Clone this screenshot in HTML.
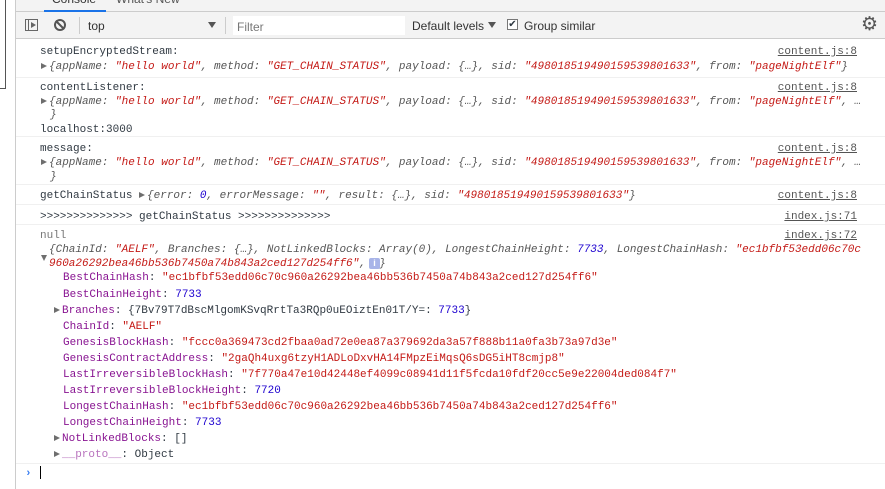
<!DOCTYPE html><html><head><meta charset="utf-8"><style>
*{margin:0;padding:0;box-sizing:border-box}
body{width:885px;height:489px;overflow:hidden;background:#fff;font-family:"Liberation Mono",monospace;font-size:11px;color:#303942;position:relative}
.l{position:absolute;white-space:pre;line-height:14px;height:14px;margin-top:2px}
.s{color:#c41a16}.k{color:#881391}.n{color:#1c00cf}.i{font-style:italic;color:#565656}
.lnk{position:absolute;right:28px;text-decoration:underline;color:#545454;white-space:pre;line-height:14px;margin-top:2px}
.b{position:absolute;left:16px;right:0;height:1px;background:#f0f0f0}
.ar{display:inline-block;width:0;height:0;border-left:6px solid #6e6e6e;border-top:3.5px solid transparent;border-bottom:3.5px solid transparent;margin-right:2px}
.ad{position:absolute;width:0;height:0;border-top:6px solid #6e6e6e;border-left:3.5px solid transparent;border-right:3.5px solid transparent}
.ui{font-family:"Liberation Sans",sans-serif;font-size:12px;position:absolute;color:#333}
</style></head><body>
<div style="position:absolute;left:15px;top:0;width:1px;height:489px;background:#ccc"></div>
<div style="position:absolute;left:5px;top:0;width:1px;height:88px;background:#555"></div>
<div style="position:absolute;left:0;top:88px;width:6px;height:1px;background:#555"></div>
<div style="position:absolute;left:16px;top:0;right:0;height:12px;background:#f3f3f3;border-bottom:1px solid #ccc"></div>
<div style="position:absolute;left:44px;top:10px;width:62px;height:2px;background:#1a73e8"></div>
<div class="ui" style="top:-8px;left:52px;color:#333">Console</div><div class="ui" style="top:-8px;left:116px;color:#555">What's New</div>
<div style="position:absolute;left:16px;top:12px;right:0;height:27px;background:#f3f3f3;border-bottom:1px solid #ccc"></div>
<div style="position:absolute;left:25px;top:19px;width:13px;height:12px;border:1px solid #666"></div>
<div style="position:absolute;left:28px;top:19px;width:1px;height:12px;background:#666"></div>
<div style="position:absolute;left:31px;top:22px;border-left:5px solid #666;border-top:3px solid transparent;border-bottom:3px solid transparent"></div>
<div style="position:absolute;left:54px;top:19px;width:12px;height:12px;border:2px solid #555;border-radius:50%"></div>
<div style="position:absolute;left:54px;top:24px;width:12px;height:2px;background:#555;transform:rotate(45deg)"></div>
<div style="position:absolute;left:79px;top:17px;width:1px;height:17px;background:#ccc"></div>
<div class="ui" style="left:88px;top:19px">top</div>
<div style="position:absolute;left:208px;top:22px;border-top:6px solid #555;border-left:4px solid transparent;border-right:4px solid transparent"></div>
<div style="position:absolute;left:225px;top:17px;width:1px;height:17px;background:#ccc"></div>
<div style="position:absolute;left:233px;top:16px;width:172px;height:19px;background:#fff"></div>
<div class="ui" style="left:237px;top:20px;color:#777">Filter</div>
<div class="ui" style="left:412px;top:19px">Default levels</div>
<div style="position:absolute;left:488px;top:22px;border-top:6px solid #555;border-left:4px solid transparent;border-right:4px solid transparent"></div>
<div style="position:absolute;left:507px;top:19px;width:11px;height:11px;border:1px solid #777;background:#fff;font-size:10px;line-height:9px;text-align:center;font-family:'DejaVu Sans'">✔</div>
<div class="ui" style="left:524px;top:19px">Group similar</div>
<div style="position:absolute;left:861px;top:13px;font-size:19px;color:#555;font-family:'DejaVu Sans'">⚙</div>

<div class="l" style="left:40px;top:43px">setupEncryptedStream:</div><div class="lnk" style="top:43px">content.js:8</div>
<div class="l" style="left:41px;top:58px"><span class="ar"></span><span class="i">{appName: <span class="s">"hello world"</span>, method: <span class="s">"GET_CHAIN_STATUS"</span>, payload: {…}, sid: <span class="s">"498018519490159539801633"</span>, from: <span class="s">"pageNightElf"</span>}</span></div>
<div class="b" style="top:77px"></div>
<div class="l" style="left:40px;top:79px">contentListener:</div><div class="lnk" style="top:79px">content.js:8</div>
<div class="l" style="left:41px;top:93px"><span class="ar"></span><span class="i">{appName: <span class="s">"hello world"</span>, method: <span class="s">"GET_CHAIN_STATUS"</span>, payload: {…}, sid: <span class="s">"498018519490159539801633"</span>, from: <span class="s">"pageNightElf"</span>, …</span></div>
<div class="l i" style="left:50px;top:106px">}</div>
<div class="l" style="left:40px;top:121px">localhost:3000</div>
<div class="b" style="top:136px"></div>
<div class="l" style="left:40px;top:140px">message:</div><div class="lnk" style="top:140px">content.js:8</div>
<div class="l" style="left:41px;top:154px"><span class="ar"></span><span class="i">{appName: <span class="s">"hello world"</span>, method: <span class="s">"GET_CHAIN_STATUS"</span>, payload: {…}, sid: <span class="s">"498018519490159539801633"</span>, from: <span class="s">"pageNightElf"</span>, …</span></div>
<div class="l i" style="left:50px;top:168px">}</div>
<div class="b" style="top:184px"></div>
<div class="l" style="left:40px;top:187px">getChainStatus <span class="ar"></span><span class="i">{error: <span class="n">0</span>, errorMessage: <span class="s">""</span>, result: {…}, sid: <span class="s">"498018519490159539801633"</span>}</span></div><div class="lnk" style="top:187px">content.js:8</div>
<div class="b" style="top:204px"></div>
<div class="l" style="left:40px;top:208px">&gt;&gt;&gt;&gt;&gt;&gt;&gt;&gt;&gt;&gt;&gt;&gt;&gt;&gt; getChainStatus &gt;&gt;&gt;&gt;&gt;&gt;&gt;&gt;&gt;&gt;&gt;&gt;&gt;&gt;</div><div class="lnk" style="top:208px">index.js:71</div>
<div class="b" style="top:224px"></div>
<div class="l" style="left:40px;top:227px;color:#777">null</div><div class="lnk" style="top:227px">index.js:72</div>
<div class="ad" style="left:41px;top:255px"></div>
<div class="l i" style="left:49px;top:241px">{ChainId: <span class="s">"AELF"</span>, Branches: {…}, NotLinkedBlocks: Array(0), LongestChainHeight: <span class="n">7733</span>, LongestChainHash: <span class="s">"ec1bfbf53edd06c70c</span></div>
<div class="l i" style="left:49px;top:255px"><span class="s">960a26292bea46bb536b7450a74b843a2ced127d254ff6"</span>, …}</div>
<div style="position:absolute;left:369px;top:258px;width:11px;height:11px;background:#a8b4e8;color:#fff;font:bold 9px 'Liberation Sans';text-align:center;line-height:11px;border-radius:2px">i</div>
<div class="l" style="left:63px;top:269px"><span class="k">BestChainHash</span>: <span class="s">"ec1bfbf53edd06c70c960a26292bea46bb536b7450a74b843a2ced127d254ff6"</span></div>
<div class="l" style="left:63px;top:286px"><span class="k">BestChainHeight</span>: <span class="n">7733</span></div>
<div class="l" style="left:54px;top:302px"><span class="ar"></span><span class="k">Branches</span>: {7Bv79T7dBscMlgomKSvqRrtTa3RQp0uEOiztEn01T/Y=: <span class="n">7733</span>}</div>
<div class="l" style="left:63px;top:318px"><span class="k">ChainId</span>: <span class="s">"AELF"</span></div>
<div class="l" style="left:63px;top:334px"><span class="k">GenesisBlockHash</span>: <span class="s">"fccc0a369473cd2fbaa0ad72e0ea87a379692da3a57f888b11a0fa3b73a97d3e"</span></div>
<div class="l" style="left:63px;top:350px"><span class="k">GenesisContractAddress</span>: <span class="s">"2gaQh4uxg6tzyH1ADLoDxvHA14FMpzEiMqsQ6sDG5iHT8cmjp8"</span></div>
<div class="l" style="left:63px;top:366px"><span class="k">LastIrreversibleBlockHash</span>: <span class="s">"7f770a47e10d42448ef4099c08941d11f5fcda10fdf20cc5e9e22004ded084f7"</span></div>
<div class="l" style="left:63px;top:382px"><span class="k">LastIrreversibleBlockHeight</span>: <span class="n">7720</span></div>
<div class="l" style="left:63px;top:398px"><span class="k">LongestChainHash</span>: <span class="s">"ec1bfbf53edd06c70c960a26292bea46bb536b7450a74b843a2ced127d254ff6"</span></div>
<div class="l" style="left:63px;top:414px"><span class="k">LongestChainHeight</span>: <span class="n">7733</span></div>
<div class="l" style="left:54px;top:430px"><span class="ar"></span><span class="k">NotLinkedBlocks</span>: []</div>
<div class="l" style="left:54px;top:446px"><span class="ar"></span><span class="k" style="opacity:.6">__proto__</span>: Object</div>
<div class="b" style="top:463px"></div>
<div class="l" style="left:25px;top:465px;color:#367cf1;font-weight:bold">›</div>
<div style="position:absolute;left:40px;top:466px;width:1px;height:13px;background:#000"></div>
</body></html>
